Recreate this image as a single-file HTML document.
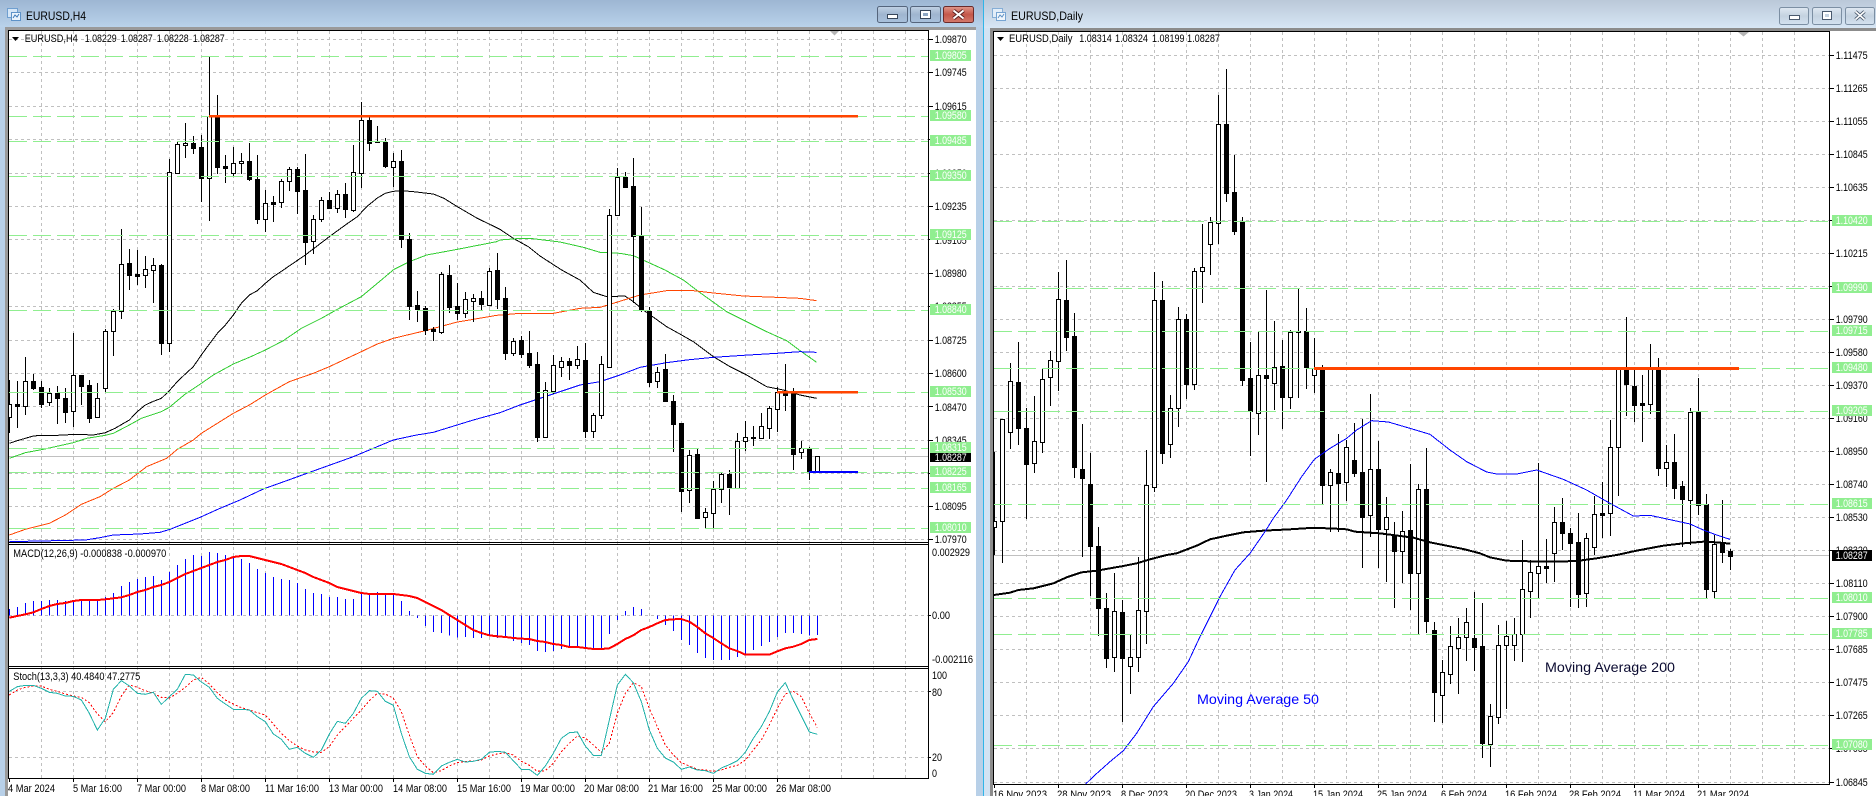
<!DOCTYPE html>
<html><head><meta charset="utf-8"><title>EURUSD</title>
<style>
html,body{margin:0;padding:0;background:#fff;width:1876px;height:796px;overflow:hidden}
svg{display:block}
text{font-family:"Liberation Sans",sans-serif;font-size:11px;fill:#000}
.g{fill:#fff}
.w{fill:#fff}
.ti{font-size:12px;fill:#000}
</style></head><body>
<svg width="1876" height="796" viewBox="0 0 1876 796" xmlns="http://www.w3.org/2000/svg">
<defs>
<linearGradient id="t1" x1="0" y1="0" x2="0" y2="1"><stop offset="0" stop-color="#9db6d3"/><stop offset="1" stop-color="#b9d2ea"/></linearGradient>
<linearGradient id="t2" x1="0" y1="0" x2="0" y2="1"><stop offset="0" stop-color="#bac8d8"/><stop offset="1" stop-color="#d7e6f4"/></linearGradient>
<linearGradient id="b1" x1="0" y1="0" x2="0" y2="1"><stop offset="0" stop-color="#c2d2e4"/><stop offset=".5" stop-color="#9fb5cf"/><stop offset="1" stop-color="#a9c1dc"/></linearGradient>
<linearGradient id="b2" x1="0" y1="0" x2="0" y2="1"><stop offset="0" stop-color="#e0988c"/><stop offset=".5" stop-color="#c4574a"/><stop offset="1" stop-color="#d47a6c"/></linearGradient>
<linearGradient id="b3" x1="0" y1="0" x2="0" y2="1"><stop offset="0" stop-color="#e0e9f2"/><stop offset=".5" stop-color="#c4d2e0"/><stop offset="1" stop-color="#d4e2f0"/></linearGradient>
<clipPath id="cm"><rect x="9" y="31" width="919" height="511"/></clipPath>
<clipPath id="cp"><rect x="9" y="545" width="919" height="121"/></clipPath>
<clipPath id="cs"><rect x="9" y="669" width="919" height="109"/></clipPath>
<clipPath id="cr"><rect x="994" y="32" width="835" height="752"/></clipPath>
</defs>

<!-- window chrome -->
<rect x="0" y="0" width="983" height="796" fill="#b8d0e8"/>
<rect x="0" y="0" width="983" height="27" fill="url(#t1)"/>
<rect x="5" y="27" width="971" height="769" fill="#9a9a9a"/>
<rect x="8" y="30" width="968" height="766" fill="#fff"/>
<rect x="983" y="0" width="1" height="796" fill="#2fb5e8"/>
<rect x="984" y="0" width="892" height="796" fill="#d2e3f3"/>
<rect x="984" y="0" width="892" height="28" fill="url(#t2)"/>
<rect x="990" y="28" width="886" height="768" fill="#8c8c8c"/>
<rect x="993" y="31" width="883" height="765" fill="#fff"/>

<!-- title icons -->
<rect x="7.5" y="8.5" width="10" height="9" fill="#d5e6f7" stroke="#6f9fd0"/>
<rect x="11.5" y="12.5" width="9" height="8" fill="#eaf3fc" stroke="#5d92c8"/>
<path d="M13 18l2-3 2 2 2-3" fill="none" stroke="#3a78b8"/>
<rect x="992.5" y="8.5" width="10" height="9" fill="#e2edf8" stroke="#86aed6"/>
<rect x="996.5" y="12.5" width="9" height="8" fill="#f0f6fc" stroke="#76a4d2"/>
<path d="M998 18l2-3 2 2 2-3" fill="none" stroke="#5c90c4"/>
<text class="ti" x="26" y="20" textLength="60" lengthAdjust="spacingAndGlyphs">EURUSD,H4</text>
<text class="ti" x="1011" y="20" textLength="72" lengthAdjust="spacingAndGlyphs">EURUSD,Daily</text>

<!-- window buttons -->
<rect x="877.5" y="6.5" width="30" height="16" rx="2" fill="url(#b1)" stroke="#55657c"/>
<rect x="910.5" y="6.5" width="30" height="16" rx="2" fill="url(#b1)" stroke="#55657c"/>
<rect x="943.5" y="6.5" width="30" height="16" rx="2" fill="url(#b2)" stroke="#6a2a2a"/>
<rect x="887.5" y="14.5" width="10" height="4" fill="#fff" stroke="#37465a"/>
<rect x="920.5" y="10.5" width="10" height="8" fill="#fff" stroke="#37465a"/>
<rect x="923" y="13" width="5" height="3" fill="#8ea6c2"/>
<path d="M953.5 10.5L963.5 18.5M963.5 10.5L953.5 18.5" stroke="#5a2020" stroke-width="4"/>
<path d="M953.5 10.5L963.5 18.5M963.5 10.5L953.5 18.5" stroke="#fff" stroke-width="2"/>
<rect x="1779.5" y="7.5" width="29" height="17" rx="2" fill="url(#b3)" stroke="#7c8fa3"/>
<rect x="1812.5" y="7.5" width="29" height="17" rx="2" fill="url(#b3)" stroke="#7c8fa3"/>
<rect x="1845.5" y="7.5" width="29" height="17" rx="2" fill="url(#b3)" stroke="#7c8fa3"/>
<rect x="1789.5" y="15.5" width="10" height="4" fill="#fff" stroke="#4a5a6e"/>
<rect x="1822.5" y="11.5" width="9" height="8" fill="#fff" stroke="#4a5a6e"/>
<rect x="1825" y="14" width="4" height="3" fill="#c4d2e0"/>
<path d="M1855.5 11.5L1864.5 19.5M1864.5 11.5L1855.5 19.5" stroke="#4a5a6e" stroke-width="3.4"/>
<path d="M1855.5 11.5L1864.5 19.5M1864.5 11.5L1855.5 19.5" stroke="#fff" stroke-width="1.6"/>

<!-- LEFT grid -->
<g shape-rendering="crispEdges" stroke="#c0c0c0" fill="none" stroke-dasharray="3 3">
<path d="M41.5 31V778M73.5 31V778M105.5 31V778M137.5 31V778M169.5 31V778M201.5 31V778M233.5 31V778M265.5 31V778M297.5 31V778M329.5 31V778M361.5 31V778M393.5 31V778M425.5 31V778M457.5 31V778M489.5 31V778M521.5 31V778M553.5 31V778M585.5 31V778M617.5 31V778M649.5 31V778M681.5 31V778M713.5 31V778M745.5 31V778M777.5 31V778M809.5 31V778M841.5 31V778M873.5 31V778M905.5 31V778"/>
<path d="M9 39.5H928M9 72.5H928M9 106.5H928M9 139.5H928M9 173.5H928M9 206.5H928M9 239.5H928M9 273.5H928M9 306.5H928M9 340.5H928M9 373.5H928M9 406.5H928M9 440.5H928M9 473.5H928M9 506.5H928M9 539.5H928M9 615.5H928M9 691.5H928M9 757.5H928"/>
</g>
<path d="M9 456.5H928" stroke="#c0c0c0" shape-rendering="crispEdges"/>

<!-- LEFT MAs -->
<g clip-path="url(#cm)"><g transform="translate(0,270) scale(.33333)" fill="none" stroke-width="3" shape-rendering="crispEdges">
<polyline stroke="#000" points="28,520 52,512 76,505 100,498 124,496 172,496 208,494 256,494 280,495 316,488 345,475 388,450 412,425 436,405 460,394 484,385 508,362 532,335 556,312 580,290 604,255 628,222 652,190 676,165 700,135 724,100 748,75 772,62 796,40 820,20 850,0 916,-45 988,-100 1036,-135 1072,-160 1100,-190 1132,-216 1156,-230 1180,-236 1204,-238 1240,-235 1300,-228 1332,-215 1372,-190 1432,-155 1490,-127 1500,-122 1540,-95 1585,-70 1620,-42 1685,0 1740,30 1780,67 1820,80 1875,78 1900,95 1930,120 2000,170 2045,195 2080,215 2140,260 2190,290 2240,315 2300,350 2350,360 2400,375 2450,385"/>
<polyline stroke="#32cd32" points="28,565 76,548 130,538 220,518 260,505 316,496 340,490 388,465 424,445 484,425 508,412 556,372 604,340 640,315 700,282 748,262 796,240 850,212 904,175 964,145 1012,118 1084,80 1132,40 1182,-2 1228,-25 1280,-45 1372,-62 1490,-85 1500,-90 1550,-94 1590,-95 1680,-84 1750,-68 1800,-53 1860,-50 1900,-43 1940,-25 1995,0 2050,30 2100,68 2180,125 2240,155 2300,185 2360,212 2400,242 2450,277"/>
<polyline stroke="#ff4500" points="28,795 76,778 148,760 196,735 244,703 300,680 340,655 388,630 440,590 500,565 532,538 580,510 604,490 652,460 700,430 748,405 796,375 868,335 940,310 988,290 1084,245 1132,222 1180,205 1276,182 1372,156 1420,148 1490,136 1560,130 1660,130 1740,115 1800,112 1840,100 1920,75 2000,62 2080,62 2150,70 2230,78 2330,82 2400,85 2450,92"/>
<polyline stroke="#0000ff" points="28,815 256,810 300,803 340,795 420,792 480,787 510,778 600,742 660,715 720,690 790,657 860,632 940,603 1010,578 1060,560 1180,510 1250,495 1300,487 1420,450 1500,428 1560,405 1620,385 1680,365 1740,345 1800,335 1860,315 1920,292 2000,278 2060,270 2140,262 2230,256 2330,250 2400,245 2450,247"/>
</g>

<!-- LEFT candles -->
<g shape-rendering="crispEdges">
<path stroke="#000" fill="none" d="M9.5 380V433M17.5 381V428M25.5 357V415M33.5 374V390M41.5 381V408M49.5 388V406M57.5 386V424M65.5 388V423M73.5 333V427M81.5 375V405M89.5 380V423M97.5 383V418M105.5 329V392M113.5 309V356M121.5 229V319M129.5 249V290M137.5 250V285M145.5 256V288M153.5 258V303M161.5 264V355M169.5 159V352M177.5 142V173M185.5 123V158M193.5 136V154M201.5 135V202M209.5 57V221M217.5 95V174M225.5 155V183M233.5 147V176M241.5 153V174M249.5 143V181M257.5 155V224M265.5 190V232M273.5 196V222M281.5 179V208M289.5 167V191M297.5 167V214M305.5 154V265M313.5 215V254M321.5 197V222M329.5 192V209M337.5 190V213M345.5 183V218M353.5 145V212M361.5 102V188M369.5 117V151M377.5 126V142M385.5 138V168M393.5 153V187M401.5 150V248M409.5 233V320M417.5 291V322M425.5 306V335M433.5 327V341M441.5 272V334M449.5 265V313M457.5 283V320M465.5 292V318M473.5 294V322M481.5 291V310M489.5 268V306M497.5 253V309M505.5 287V360M513.5 338V356M521.5 336V358M529.5 331V368M537.5 352V442M545.5 382V437M553.5 355V394M561.5 357V377M569.5 358V380M577.5 346V369M585.5 343V438M593.5 413V438M601.5 356V419M609.5 209V368M617.5 168V215M625.5 172V187M633.5 158V303M641.5 207V312M649.5 307V387M657.5 367V388M665.5 354V402M673.5 395V452M681.5 423V512M689.5 450V503M697.5 449V519M705.5 508V528M713.5 481V528M721.5 473V503M729.5 470V515M737.5 433V489M745.5 421V451M753.5 426V446M761.5 413V438M769.5 406V439M777.5 387V432M785.5 364V411M793.5 388V470M801.5 441V459M809.5 447V480M817.5 456V472"/>
<path fill="#fff" stroke="#000" d="M7.5 404.5h4v13h-4zM23.5 381.5h4v25h-4zM47.5 393.5h4v9h-4zM71.5 375.5h4v36h-4zM95.5 398.5h4v19h-4zM103.5 331.5h4v57h-4zM111.5 311.5h4v20h-4zM119.5 264.5h4v47h-4zM143.5 269.5h4v6h-4zM151.5 265.5h4v5h-4zM167.5 172.5h4v171h-4zM175.5 144.5h4v29h-4zM183.5 143.5h4v2h-4zM207.5 116.5h4v62h-4zM231.5 163.5h4v10h-4zM239.5 161.5h4v2h-4zM263.5 203.5h4v16h-4zM279.5 181.5h4v21h-4zM287.5 169.5h4v12h-4zM311.5 219.5h4v22h-4zM319.5 200.5h4v19h-4zM335.5 194.5h4v14h-4zM351.5 172.5h4v38h-4zM359.5 120.5h4v53h-4zM391.5 161.5h4v6h-4zM439.5 274.5h4v58h-4zM463.5 299.5h4v14h-4zM471.5 298.5h4v3h-4zM487.5 271.5h4v34h-4zM511.5 341.5h4v12h-4zM543.5 390.5h4v47h-4zM551.5 365.5h4v26h-4zM559.5 361.5h4v6h-4zM575.5 359.5h4v6h-4zM591.5 415.5h4v16h-4zM599.5 364.5h4v51h-4zM607.5 215.5h4v152h-4zM615.5 177.5h4v38h-4zM655.5 372.5h4v9h-4zM687.5 455.5h4v35h-4zM703.5 512.5h4v5h-4zM711.5 489.5h4v24h-4zM719.5 474.5h4v15h-4zM735.5 441.5h4v47h-4zM743.5 437.5h4v4h-4zM751.5 437.5h4v1h-4zM759.5 426.5h4v12h-4zM767.5 408.5h4v20h-4zM775.5 392.5h4v17h-4zM799.5 448.5h4v4h-4zM815.5 456.5h4v16h-4z"/>
<path fill="#000" d="M15 404h5v3h-5zM31 381h5v8h-5zM39 387h5v18h-5zM55 393h5v6h-5zM63 398h5v15h-5zM79 375h5v12h-5zM87 385h5v34h-5zM127 263h5v13h-5zM135 274h5v3h-5zM159 265h5v79h-5zM191 143h5v6h-5zM199 147h5v32h-5zM215 116h5v52h-5zM223 166h5v3h-5zM247 161h5v19h-5zM255 179h5v41h-5zM271 202h5v3h-5zM295 169h5v23h-5zM303 190h5v53h-5zM327 200h5v9h-5zM343 194h5v16h-5zM367 120h5v24h-5zM375 141h5v2h-5zM383 142h5v25h-5zM399 161h5v79h-5zM407 239h5v68h-5zM415 305h5v5h-5zM423 308h5v23h-5zM431 329h5v3h-5zM447 275h5v33h-5zM455 306h5v8h-5zM479 298h5v7h-5zM495 270h5v30h-5zM503 298h5v56h-5zM519 340h5v15h-5zM527 353h5v13h-5zM535 364h5v74h-5zM567 361h5v5h-5zM583 360h5v72h-5zM623 177h5v11h-5zM631 186h5v51h-5zM639 236h5v74h-5zM647 311h5v72h-5zM663 369h5v33h-5zM671 401h5v24h-5zM679 423h5v69h-5zM695 454h5v65h-5zM727 474h5v14h-5zM783 392h5v4h-5zM791 393h5v62h-5zM807 449h5v24h-5z"/>
</g>
<!-- LEFT levels -->
<path shape-rendering="crispEdges" fill="none" stroke="#90ee90" stroke-dasharray="18 6" d="M9 56.5H928M9 116.5H928M9 141.5H928M9 176.5H928M9 235.5H928M9 310.5H928M9 392.5H928M9 448.5H928M9 472.5H928M9 488.5H928M9 528.5H928"/>
<rect x="209" y="115" width="649" height="2.5" fill="#ff4500"/>
<rect x="777" y="391" width="81" height="2.5" fill="#ff4500"/>
<rect x="809" y="471" width="49" height="2" fill="#0000ff"/>
</g>
<path d="M830 31h9l-4.5 4.500z" fill="#b4b4b4"/>

<!-- LEFT MACD -->
<g clip-path="url(#cp)"><g transform="translate(0,530) scale(.33333)" fill="none" shape-rendering="crispEdges">
<path stroke="#0000ff" stroke-width="3" d="M28.500 256V237M52.500 256V231M76.500 256V219M100.500 256V213M124.500 256V213M148.500 256V210M172.500 256V210M196.500 256V213M220.500 256V210M244.500 256V210M268.500 256V210M292.500 256V210M316.500 256V201M340.500 256V189M364.500 256V168M388.500 256V156M412.500 256V147M436.500 256V141M460.500 256V138M484.500 256V150M508.500 256V126M532.500 256V105M556.500 256V87M580.500 256V75M604.500 256V78M628.500 256V66M652.500 256V69M676.500 256V75M700.500 256V84M724.500 256V87M748.500 256V99M772.500 256V117M796.500 256V129M820.500 256V141M844.500 256V147M868.500 256V150M892.500 256V159M916.500 256V177M940.500 256V189M964.500 256V192M988.500 256V201M1012.500 256V201M1036.500 256V207M1060.500 256V207M1084.500 256V192M1108.500 256V192M1132.500 256V186M1156.500 256V192M1180.500 256V192M1204.500 256V213M1228.500 256V243M1252.500 256V264M1276.500 256V288M1300.500 256V306M1324.500 256V309M1348.500 256V316M1372.500 256V322M1396.500 256V321M1420.500 256V324M1444.500 256V324M1468.500 256V318M1492.500 256V324M1516.500 256V321M1540.500 256V333M1564.500 256V339M1588.500 256V345M1612.500 256V363M1636.500 256V366M1660.500 256V363M1684.500 256V357M1708.500 256V348M1732.500 256V354M1756.500 256V354M1780.500 256V360M1804.500 256V354M1828.500 256V312M1852.500 256V270M1876.500 256V243M1900.500 256V231M1924.500 256V237M1972.500 256V267M1996.500 256V285M2020.500 256V303M2044.500 256V330M2068.500 256V345M2092.500 256V369M2116.500 256V384M2140.500 256V390M2164.500 256V390M2188.500 256V390M2212.500 256V381M2236.500 256V375M2260.500 256V360M2284.500 256V348M2308.500 256V336M2332.500 256V321M2356.500 256V309M2380.500 256V309M2404.500 256V312M2428.500 256V316M2452.500 256V315"/>
<polyline stroke="#ff0000" stroke-width="6" points="28,263 52,258 76,253 100,247 124,237 148,228 172,222 196,219 220,213 244,210 268,210 292,210 316,208 340,205 364,202 388,195 412,186 436,180 460,171 484,165 508,156 532,144 556,132 580,123 604,114 628,105 652,96 676,90 700,81 724,78 748,78 772,84 796,90 820,96 844,102 868,111 892,120 916,129 940,141 964,150 988,159 1012,171 1036,177 1060,183 1084,189 1108,192 1132,192 1156,192 1180,192 1204,195 1228,198 1252,204 1276,216 1300,228 1324,240 1348,255 1372,270 1396,285 1420,300 1444,309 1468,316 1492,319 1516,321 1540,324 1564,326 1588,327 1612,333 1636,336 1660,342 1684,345 1708,351 1732,351 1756,354 1780,357 1804,357 1828,355 1852,342 1876,327 1900,316 1924,300 1948,291 1972,280 1996,270 2020,268 2044,267 2068,275 2092,291 2116,310 2140,324 2164,340 2188,355 2212,363 2236,374 2260,374 2284,374 2308,374 2332,364 2356,355 2380,350 2404,342 2428,330 2452,327"/>
</g></g>

<!-- LEFT Stoch -->
<g clip-path="url(#cs)"><g transform="translate(0,530) scale(.33333)" fill="none" shape-rendering="crispEdges" stroke-width="3">
<polyline stroke="#ff0000" stroke-dasharray="6 6" points="28,495 52,480 76,472 100,468 124,468 148,478 172,484 196,492 220,498 244,502 268,518 292,552 316,575 340,548 364,498 388,465 412,472 436,482 460,490 484,502 508,504 532,490 556,472 580,450 604,442 628,462 652,488 676,510 700,522 724,533 748,540 772,548 796,555 820,582 844,610 868,632 892,648 916,660 940,666 964,667 988,650 1012,615 1036,590 1060,565 1084,540 1108,512 1132,490 1156,492 1180,505 1204,545 1228,615 1252,680 1276,708 1300,728 1324,722 1348,708 1372,698 1396,694 1420,693 1444,690 1468,678 1492,672 1516,668 1540,675 1564,694 1588,706 1612,724 1636,722 1660,700 1684,665 1708,640 1732,618 1756,624 1780,645 1804,667 1828,640 1852,550 1876,490 1900,458 1924,470 1948,535 1972,590 1996,645 2020,675 2044,698 2068,708 2092,718 2116,720 2140,724 2164,720 2188,712 2212,706 2236,690 2260,660 2284,630 2308,585 2332,535 2356,492 2380,484 2404,500 2428,550 2452,592"/>
<polyline stroke="#20b2aa" points="28,484 52,470 76,466 100,466 124,475 148,487 172,490 196,498 220,499 244,510 268,550 292,600 316,565 340,478 364,452 388,468 412,490 436,493 460,487 484,523 508,500 532,478 556,433 580,435 604,456 628,472 652,505 676,522 700,538 724,538 748,540 772,560 796,575 820,612 844,628 868,658 892,652 916,670 940,682 964,660 988,612 1012,574 1036,580 1060,550 1084,505 1108,482 1132,484 1156,514 1180,526 1204,610 1228,680 1252,718 1276,730 1300,733 1324,708 1348,697 1372,688 1396,696 1420,694 1444,688 1468,667 1492,664 1516,667 1540,692 1564,718 1588,718 1612,736 1636,708 1660,670 1684,625 1708,608 1732,606 1756,648 1780,676 1804,676 1828,570 1852,465 1876,433 1900,458 1924,515 1948,600 1972,655 1996,684 2020,696 2044,718 2068,711 2092,720 2116,722 2140,730 2164,714 2188,704 2212,692 2236,667 2260,625 2284,590 2308,545 2332,486 2356,458 2380,510 2404,558 2428,606 2452,613"/>
</g></g>

<!-- LEFT frame -->
<path shape-rendering="crispEdges" fill="none" stroke="#000" d="M8.500 30V779M928.500 30V779M8 30.500H929M8 542.500H929M8 544.500H929M8 666.500H929M8 668.500H929M8 778.500H929M928 39.500h5M928 72.500h5M928 106.500h5M928 139.500h5M928 173.500h5M928 206.500h5M928 239.500h5M928 273.500h5M928 306.500h5M928 340.500h5M928 373.500h5M928 406.500h5M928 440.500h5M928 473.500h5M928 506.500h5M928 539.500h5M928 615.500h3M928 691.500h3M928 757.500h3M9.500 779v3M73.500 779v3M137.500 779v3M201.500 779v3M265.500 779v3M329.500 779v3M393.500 779v3M457.500 779v3M521.500 779v3M585.500 779v3M649.500 779v3M713.500 779v3M777.500 779v3"/>
<path d="M12 37h7l-3.500 4z" fill="#000"/>
<text x="24.700" y="42" textLength="53" lengthAdjust="spacingAndGlyphs">EURUSD,H4</text>
<text x="84.700" y="42" textLength="32" lengthAdjust="spacingAndGlyphs">1.08229</text>
<text x="120.700" y="42" textLength="32" lengthAdjust="spacingAndGlyphs">1.08287</text>
<text x="156.700" y="42" textLength="32" lengthAdjust="spacingAndGlyphs">1.08228</text>
<text x="192.700" y="42" textLength="32" lengthAdjust="spacingAndGlyphs">1.08287</text>
<text x="13.300" y="557" textLength="153" lengthAdjust="spacingAndGlyphs">MACD(12,26,9) -0.000838 -0.000970</text>
<text x="13.300" y="680" textLength="127" lengthAdjust="spacingAndGlyphs">Stoch(13,3,3) 40.4840 47.2775</text>

<!-- left axis -->
<g>
<text x="934.700" y="43" textLength="32" lengthAdjust="spacingAndGlyphs">1.09870</text>
<text x="934.700" y="76" textLength="32" lengthAdjust="spacingAndGlyphs">1.09745</text>
<text x="934.700" y="110" textLength="32" lengthAdjust="spacingAndGlyphs">1.09615</text>
<text x="934.700" y="143" textLength="32" lengthAdjust="spacingAndGlyphs">1.09485</text>
<text x="934.700" y="177" textLength="32" lengthAdjust="spacingAndGlyphs">1.09350</text>
<text x="934.700" y="210" textLength="32" lengthAdjust="spacingAndGlyphs">1.09235</text>
<text x="934.700" y="244" textLength="32" lengthAdjust="spacingAndGlyphs">1.09105</text>
<text x="934.700" y="277" textLength="32" lengthAdjust="spacingAndGlyphs">1.08980</text>
<text x="934.700" y="310" textLength="32" lengthAdjust="spacingAndGlyphs">1.08855</text>
<text x="934.700" y="344" textLength="32" lengthAdjust="spacingAndGlyphs">1.08725</text>
<text x="934.700" y="377" textLength="32" lengthAdjust="spacingAndGlyphs">1.08600</text>
<text x="934.700" y="411" textLength="32" lengthAdjust="spacingAndGlyphs">1.08470</text>
<text x="934.700" y="444" textLength="32" lengthAdjust="spacingAndGlyphs">1.08345</text>
<text x="934.700" y="510" textLength="32" lengthAdjust="spacingAndGlyphs">1.08095</text>
<text x="934.700" y="543" textLength="32" lengthAdjust="spacingAndGlyphs">1.07970</text>
<g fill="#90ee90">
<rect x="930" y="50" width="41" height="11"/><rect x="930" y="110" width="41" height="11"/><rect x="930" y="135" width="41" height="11"/><rect x="930" y="170" width="41" height="11"/><rect x="930" y="229" width="41" height="11"/><rect x="930" y="304" width="41" height="11"/><rect x="930" y="386" width="41" height="11"/><rect x="930" y="442" width="41" height="11"/><rect x="930" y="466" width="41" height="11"/><rect x="930" y="482" width="41" height="11"/><rect x="930" y="522" width="41" height="11"/>
</g>
<text class="g" x="934.700" y="59" textLength="32" lengthAdjust="spacingAndGlyphs">1.09805</text>
<text class="g" x="934.700" y="119" textLength="32" lengthAdjust="spacingAndGlyphs">1.09580</text>
<text class="g" x="934.700" y="144" textLength="32" lengthAdjust="spacingAndGlyphs">1.09485</text>
<text class="g" x="934.700" y="179" textLength="32" lengthAdjust="spacingAndGlyphs">1.09350</text>
<text class="g" x="934.700" y="238" textLength="32" lengthAdjust="spacingAndGlyphs">1.09125</text>
<text class="g" x="934.700" y="313" textLength="32" lengthAdjust="spacingAndGlyphs">1.08840</text>
<text class="g" x="934.700" y="395" textLength="32" lengthAdjust="spacingAndGlyphs">1.08530</text>
<text class="g" x="934.700" y="451" textLength="32" lengthAdjust="spacingAndGlyphs">1.08315</text>
<text class="g" x="934.700" y="475" textLength="32" lengthAdjust="spacingAndGlyphs">1.08225</text>
<text class="g" x="934.700" y="491" textLength="32" lengthAdjust="spacingAndGlyphs">1.08165</text>
<text class="g" x="934.700" y="531" textLength="32" lengthAdjust="spacingAndGlyphs">1.08010</text>
<rect x="930" y="453" width="41" height="9" fill="#000"/>
<text class="w" x="934.700" y="461" textLength="32" lengthAdjust="spacingAndGlyphs">1.08287</text>
<text x="932" y="556" textLength="38" lengthAdjust="spacingAndGlyphs">0.002929</text>
<text x="932" y="619" textLength="18" lengthAdjust="spacingAndGlyphs">0.00</text>
<text x="932" y="663" textLength="41" lengthAdjust="spacingAndGlyphs">-0.002116</text>
<text x="932" y="679" textLength="15" lengthAdjust="spacingAndGlyphs">100</text>
<text x="932" y="696" textLength="10" lengthAdjust="spacingAndGlyphs">80</text>
<text x="932" y="761" textLength="10" lengthAdjust="spacingAndGlyphs">20</text>
<text x="932" y="777" textLength="5" lengthAdjust="spacingAndGlyphs">0</text>
</g>
<!-- left time axis -->
<text x="8" y="792" textLength="47" lengthAdjust="spacingAndGlyphs">4 Mar 2024</text>
<text x="73" y="792" textLength="49" lengthAdjust="spacingAndGlyphs">5 Mar 16:00</text>
<text x="137" y="792" textLength="49" lengthAdjust="spacingAndGlyphs">7 Mar 00:00</text>
<text x="201" y="792" textLength="49" lengthAdjust="spacingAndGlyphs">8 Mar 08:00</text>
<text x="265" y="792" textLength="54" lengthAdjust="spacingAndGlyphs">11 Mar 16:00</text>
<text x="329" y="792" textLength="54" lengthAdjust="spacingAndGlyphs">13 Mar 00:00</text>
<text x="393" y="792" textLength="54" lengthAdjust="spacingAndGlyphs">14 Mar 08:00</text>
<text x="457" y="792" textLength="54" lengthAdjust="spacingAndGlyphs">15 Mar 16:00</text>
<text x="520" y="792" textLength="55" lengthAdjust="spacingAndGlyphs">19 Mar 00:00</text>
<text x="584" y="792" textLength="55" lengthAdjust="spacingAndGlyphs">20 Mar 08:00</text>
<text x="648" y="792" textLength="55" lengthAdjust="spacingAndGlyphs">21 Mar 16:00</text>
<text x="712" y="792" textLength="55" lengthAdjust="spacingAndGlyphs">25 Mar 00:00</text>
<text x="776" y="792" textLength="55" lengthAdjust="spacingAndGlyphs">26 Mar 08:00</text>

<!-- RIGHT grid -->
<g shape-rendering="crispEdges" stroke="#c0c0c0" fill="none" stroke-dasharray="3 3">
<path d="M1026.500 32V784M1058.500 32V784M1090.500 32V784M1122.500 32V784M1154.500 32V784M1186.500 32V784M1218.500 32V784M1250.500 32V784M1282.500 32V784M1314.500 32V784M1346.500 32V784M1378.500 32V784M1410.500 32V784M1442.500 32V784M1474.500 32V784M1506.500 32V784M1538.500 32V784M1570.500 32V784M1602.500 32V784M1634.500 32V784M1666.500 32V784M1698.500 32V784M1730.500 32V784M1762.500 32V784M1794.500 32V784"/>
<path d="M994 55.500H1829M994 88.500H1829M994 121.500H1829M994 154.500H1829M994 187.500H1829M994 220.500H1829M994 253.500H1829M994 286.500H1829M994 319.500H1829M994 352.500H1829M994 385.500H1829M994 418.500H1829M994 451.500H1829M994 484.500H1829M994 517.500H1829M994 550.500H1829M994 583.500H1829M994 616.500H1829M994 649.500H1829M994 682.500H1829M994 715.500H1829M994 748.500H1829M994 782.500H1829"/>
</g>
<path d="M994 555.500H1829" stroke="#c0c0c0" shape-rendering="crispEdges"/>

<g clip-path="url(#cr)">
<!-- RIGHT candles -->
<g shape-rendering="crispEdges">
<path stroke="#000" fill="none" d="M994.500 452V555M1002.500 419V563M1010.500 363V449M1018.500 342V445M1026.500 408V519M1034.500 396V473M1042.500 369V453M1050.500 351V406M1058.500 272V391M1066.500 260V351M1074.500 313V478M1082.500 424V557M1090.500 453V596M1098.500 527V636M1106.500 593V668M1114.500 573V672M1122.500 600V722M1130.500 635V694M1138.500 557V672M1146.500 450V644M1154.500 272V492M1162.500 281V464M1170.500 395V458M1178.500 307V427M1186.500 314V399M1194.500 268V390M1202.500 224V303M1210.500 217V275M1218.500 95V244M1226.500 69V202M1234.500 155V235M1242.500 217V386M1250.500 342V456M1258.500 332V435M1266.500 290V482M1274.500 321V410M1282.500 340V429M1290.500 330V409M1298.500 289V398M1306.500 308V389M1314.500 338V393M1322.500 365V504M1330.500 469V532M1338.500 434V532M1346.500 440V501M1354.500 423V477M1362.500 419V568M1370.500 394V537M1378.500 441V568M1386.500 497V582M1394.500 522V608M1402.500 511V583M1410.500 464V610M1418.500 484V634M1426.500 448V633M1434.500 622V722M1442.500 660V723M1450.500 626V684M1458.500 618V694M1466.500 608V661M1474.500 592V671M1482.500 603V758M1490.500 704V767M1498.500 625V724M1506.500 621V709M1514.500 618V661M1522.500 540V662M1530.500 560V618M1538.500 463V598M1546.500 539V583M1554.500 507V582M1562.500 498V550M1570.500 528V607M1578.500 513V608M1586.500 533V607M1594.500 496V555M1602.500 482V538M1610.500 420V536M1618.500 368V496M1626.500 317V416M1634.500 369V422M1642.500 375V442M1650.500 344V414M1658.500 358V476M1666.500 445V487M1674.500 434V499M1682.500 481V547M1690.500 408V545M1698.500 378V515M1706.500 494V598M1714.500 535V598M1722.500 500V563M1730.500 549V570"/>
<path fill="#fff" stroke="#000" d="M992.500 521.500h4v6h-4zM1000.500 419.500h4v102h-4zM1008.500 381.500h4v51h-4zM1032.500 441.500h4v22h-4zM1040.500 379.500h4v63h-4zM1048.500 360.500h4v17h-4zM1056.500 299.500h4v62h-4zM1112.500 611.500h4v46h-4zM1128.500 657.500h4v9h-4zM1136.500 610.500h4v47h-4zM1144.500 485.500h4v126h-4zM1152.500 300.500h4v187h-4zM1168.500 408.500h4v36h-4zM1176.500 319.500h4v89h-4zM1192.500 271.500h4v113h-4zM1200.500 267.500h4v4h-4zM1208.500 222.500h4v22h-4zM1216.500 124.500h4v99h-4zM1256.500 375.500h4v38h-4zM1272.500 367.500h4v16h-4zM1288.500 332.500h4v65h-4zM1312.500 368.500h4v7h-4zM1328.500 472.500h4v13h-4zM1344.500 447.500h4v35h-4zM1368.500 469.500h4v46h-4zM1384.500 517.500h4v12h-4zM1400.500 531.500h4v20h-4zM1416.500 489.500h4v84h-4zM1440.500 672.500h4v23h-4zM1448.500 646.500h4v28h-4zM1456.500 637.500h4v11h-4zM1464.500 622.500h4v15h-4zM1488.500 716.500h4v28h-4zM1496.500 645.500h4v72h-4zM1504.500 636.500h4v9h-4zM1512.500 634.500h4v11h-4zM1520.500 589.500h4v45h-4zM1528.500 572.500h4v19h-4zM1536.500 566.500h4v7h-4zM1552.500 522.500h4v31h-4zM1584.500 538.500h4v55h-4zM1592.500 514.500h4v33h-4zM1608.500 447.500h4v66h-4zM1616.500 368.500h4v79h-4zM1648.500 369.500h4v35h-4zM1664.500 462.500h4v6h-4zM1688.500 412.500h4v88h-4zM1712.500 544.500h4v47h-4z"/>
<path fill="#000" d="M1016 382h5v47h-5zM1024 428h5v37h-5zM1064 300h5v38h-5zM1072 336h5v132h-5zM1080 469h5v10h-5zM1088 484h5v63h-5zM1096 546h5v63h-5zM1104 608h5v51h-5zM1120 612h5v47h-5zM1160 300h5v154h-5zM1184 319h5v66h-5zM1224 124h5v70h-5zM1232 192h5v40h-5zM1240 222h5v159h-5zM1248 378h5v34h-5zM1264 375h5v4h-5zM1280 366h5v32h-5zM1296 331h5v2h-5zM1304 331h5v37h-5zM1320 369h5v117h-5zM1336 473h5v11h-5zM1352 460h5v14h-5zM1360 472h5v46h-5zM1376 469h5v61h-5zM1392 536h5v16h-5zM1408 530h5v44h-5zM1424 489h5v133h-5zM1432 630h5v63h-5zM1472 638h5v10h-5zM1480 646h5v98h-5zM1544 566h5v3h-5zM1560 522h5v12h-5zM1568 533h5v11h-5zM1576 542h5v53h-5zM1600 513h5v3h-5zM1624 369h5v16h-5zM1632 386h5v20h-5zM1640 403h5v3h-5zM1656 369h5v100h-5zM1672 462h5v27h-5zM1680 486h5v14h-5zM1696 412h5v94h-5zM1704 504h5v86h-5zM1720 543h5v10h-5zM1728 551h5v6h-5z"/>
</g>
<!-- RIGHT MAs -->
<g transform="translate(980,530) scale(.33333)" fill="none" shape-rendering="crispEdges">
<polyline stroke="#000" stroke-width="6" points="42,195 90,188 115,180 160,175 220,160 260,142 305,127 350,122 430,108 470,100 510,88 560,75 590,70 650,47 690,28 740,17 790,7 850,2 930,-2 990,-6 1050,-5 1100,-2 1125,5 1200,10 1300,23 1350,37 1400,47 1450,57 1500,70 1530,82 1580,92 1650,94 1720,95 1790,93 1850,85 1910,75 1970,62 2050,47 2110,40 2170,35 2210,37 2250,41"/>
<polyline stroke="#0000ff" stroke-width="3" points="317,762 345,735 390,695 430,662 470,610 520,530 580,460 625,395 660,320 720,200 765,120 810,70 855,5 880,-35 920,-90 965,-160 1003,-212 1050,-245 1100,-275 1130,-300 1175,-328 1225,-324 1290,-305 1350,-287 1410,-240 1460,-205 1520,-174 1550,-168 1610,-168 1670,-180 1750,-152 1820,-120 1890,-80 1960,-42 2010,-44 2130,-18 2170,0 2210,15 2250,28"/>
</g>
<!-- RIGHT levels -->
<path shape-rendering="crispEdges" fill="none" stroke="#90ee90" stroke-dasharray="18 6" d="M994 221.500H1829M994 288.500H1829M994 331.500H1829M994 368.500H1829M994 411.500H1829M994 504.500H1829M994 598.500H1829M994 634.500H1829M994 745.500H1829"/>
<rect x="1314" y="367" width="425" height="3" fill="#ff4500"/>
</g>
<path d="M1738 32h11l-5.500 4.500z" fill="#b4b4b4"/>
<text x="1197" y="704" style="font-size:14px;fill:#0000ff" textLength="122" lengthAdjust="spacingAndGlyphs">Moving Average 50</text>
<text x="1545" y="672" style="font-size:14px;fill:#0a0a30" textLength="130" lengthAdjust="spacingAndGlyphs">Moving Average 200</text>

<!-- RIGHT frame -->
<path shape-rendering="crispEdges" fill="none" stroke="#000" d="M993.500 31V785M1829.500 31V785M993 31.500H1830M993 784.500H1830M1830 55.500h4M1830 88.500h4M1830 121.500h4M1830 154.500h4M1830 187.500h4M1830 220.500h4M1830 253.500h4M1830 286.500h4M1830 319.500h4M1830 352.500h4M1830 385.500h4M1830 418.500h4M1830 451.500h4M1830 484.500h4M1830 517.500h4M1830 550.500h4M1830 583.500h4M1830 616.500h4M1830 649.500h4M1830 682.500h4M1830 715.500h4M1830 748.500h4M1830 782.500h4M994.500 785v3M1058.500 785v3M1122.500 785v3M1186.500 785v3M1250.500 785v3M1314.500 785v3M1378.500 785v3M1442.500 785v3M1506.500 785v3M1570.500 785v3M1634.500 785v3M1698.500 785v3"/>
<path d="M997 37h7l-3.500 4z" fill="#000"/>
<text x="1009" y="42" textLength="63.500" lengthAdjust="spacingAndGlyphs">EURUSD,Daily</text>
<text x="1079.300" y="42" textLength="32.500" lengthAdjust="spacingAndGlyphs">1.08314</text>
<text x="1115" y="42" textLength="33" lengthAdjust="spacingAndGlyphs">1.08324</text>
<text x="1152" y="42" textLength="32.500" lengthAdjust="spacingAndGlyphs">1.08199</text>
<text x="1187" y="42" textLength="33" lengthAdjust="spacingAndGlyphs">1.08287</text>

<!-- right axis -->
<g>
<text x="1835.700" y="59" textLength="32" lengthAdjust="spacingAndGlyphs">1.11475</text>
<text x="1835.700" y="92" textLength="32" lengthAdjust="spacingAndGlyphs">1.11265</text>
<text x="1835.700" y="125" textLength="32" lengthAdjust="spacingAndGlyphs">1.11055</text>
<text x="1835.700" y="158" textLength="32" lengthAdjust="spacingAndGlyphs">1.10845</text>
<text x="1835.700" y="191" textLength="32" lengthAdjust="spacingAndGlyphs">1.10635</text>
<text x="1835.700" y="257" textLength="32" lengthAdjust="spacingAndGlyphs">1.10215</text>
<text x="1835.700" y="323" textLength="32" lengthAdjust="spacingAndGlyphs">1.09790</text>
<text x="1835.700" y="356" textLength="32" lengthAdjust="spacingAndGlyphs">1.09580</text>
<text x="1835.700" y="389" textLength="32" lengthAdjust="spacingAndGlyphs">1.09370</text>
<text x="1835.700" y="422" textLength="32" lengthAdjust="spacingAndGlyphs">1.09160</text>
<text x="1835.700" y="455" textLength="32" lengthAdjust="spacingAndGlyphs">1.08950</text>
<text x="1835.700" y="488" textLength="32" lengthAdjust="spacingAndGlyphs">1.08740</text>
<text x="1835.700" y="521" textLength="32" lengthAdjust="spacingAndGlyphs">1.08530</text>
<text x="1835.700" y="554" textLength="32" lengthAdjust="spacingAndGlyphs">1.08320</text>
<text x="1835.700" y="587" textLength="32" lengthAdjust="spacingAndGlyphs">1.08110</text>
<text x="1835.700" y="620" textLength="32" lengthAdjust="spacingAndGlyphs">1.07900</text>
<text x="1835.700" y="653" textLength="32" lengthAdjust="spacingAndGlyphs">1.07685</text>
<text x="1835.700" y="686" textLength="32" lengthAdjust="spacingAndGlyphs">1.07475</text>
<text x="1835.700" y="719" textLength="32" lengthAdjust="spacingAndGlyphs">1.07265</text>
<text x="1835.700" y="752" textLength="32" lengthAdjust="spacingAndGlyphs">1.07055</text>
<text x="1835.700" y="786" textLength="32" lengthAdjust="spacingAndGlyphs">1.06845</text>
<g fill="#90ee90">
<rect x="1832" y="215" width="40" height="11"/><rect x="1832" y="282" width="40" height="11"/><rect x="1832" y="325" width="40" height="11"/><rect x="1832" y="362" width="40" height="11"/><rect x="1832" y="405" width="40" height="11"/><rect x="1832" y="498" width="40" height="11"/><rect x="1832" y="592" width="40" height="11"/><rect x="1832" y="628" width="40" height="11"/><rect x="1832" y="739" width="40" height="11"/>
</g>
<text class="g" x="1835.700" y="224" textLength="32" lengthAdjust="spacingAndGlyphs">1.10420</text>
<text class="g" x="1835.700" y="291" textLength="32" lengthAdjust="spacingAndGlyphs">1.09990</text>
<text class="g" x="1835.700" y="334" textLength="32" lengthAdjust="spacingAndGlyphs">1.09715</text>
<text class="g" x="1835.700" y="371" textLength="32" lengthAdjust="spacingAndGlyphs">1.09480</text>
<text class="g" x="1835.700" y="414" textLength="32" lengthAdjust="spacingAndGlyphs">1.09205</text>
<text class="g" x="1835.700" y="507" textLength="32" lengthAdjust="spacingAndGlyphs">1.08615</text>
<text class="g" x="1835.700" y="601" textLength="32" lengthAdjust="spacingAndGlyphs">1.08010</text>
<text class="g" x="1835.700" y="637" textLength="32" lengthAdjust="spacingAndGlyphs">1.07785</text>
<text class="g" x="1835.700" y="748" textLength="32" lengthAdjust="spacingAndGlyphs">1.07080</text>
<rect x="1832" y="550" width="40" height="11" fill="#000"/>
<text class="w" x="1835.700" y="559" textLength="32" lengthAdjust="spacingAndGlyphs">1.08287</text>
</g>
<!-- right time axis -->
<text x="993" y="798" textLength="54" lengthAdjust="spacingAndGlyphs">16 Nov 2023</text>
<text x="1057" y="798" textLength="54" lengthAdjust="spacingAndGlyphs">28 Nov 2023</text>
<text x="1121" y="798" textLength="47" lengthAdjust="spacingAndGlyphs">8 Dec 2023</text>
<text x="1185" y="798" textLength="52" lengthAdjust="spacingAndGlyphs">20 Dec 2023</text>
<text x="1249" y="798" textLength="44" lengthAdjust="spacingAndGlyphs">3 Jan 2024</text>
<text x="1313" y="798" textLength="50" lengthAdjust="spacingAndGlyphs">15 Jan 2024</text>
<text x="1377" y="798" textLength="50" lengthAdjust="spacingAndGlyphs">25 Jan 2024</text>
<text x="1441" y="798" textLength="46" lengthAdjust="spacingAndGlyphs">6 Feb 2024</text>
<text x="1505" y="798" textLength="52" lengthAdjust="spacingAndGlyphs">16 Feb 2024</text>
<text x="1569" y="798" textLength="52" lengthAdjust="spacingAndGlyphs">28 Feb 2024</text>
<text x="1633" y="798" textLength="52" lengthAdjust="spacingAndGlyphs">11 Mar 2024</text>
<text x="1697" y="798" textLength="52" lengthAdjust="spacingAndGlyphs">21 Mar 2024</text>
</svg>
</body></html>
